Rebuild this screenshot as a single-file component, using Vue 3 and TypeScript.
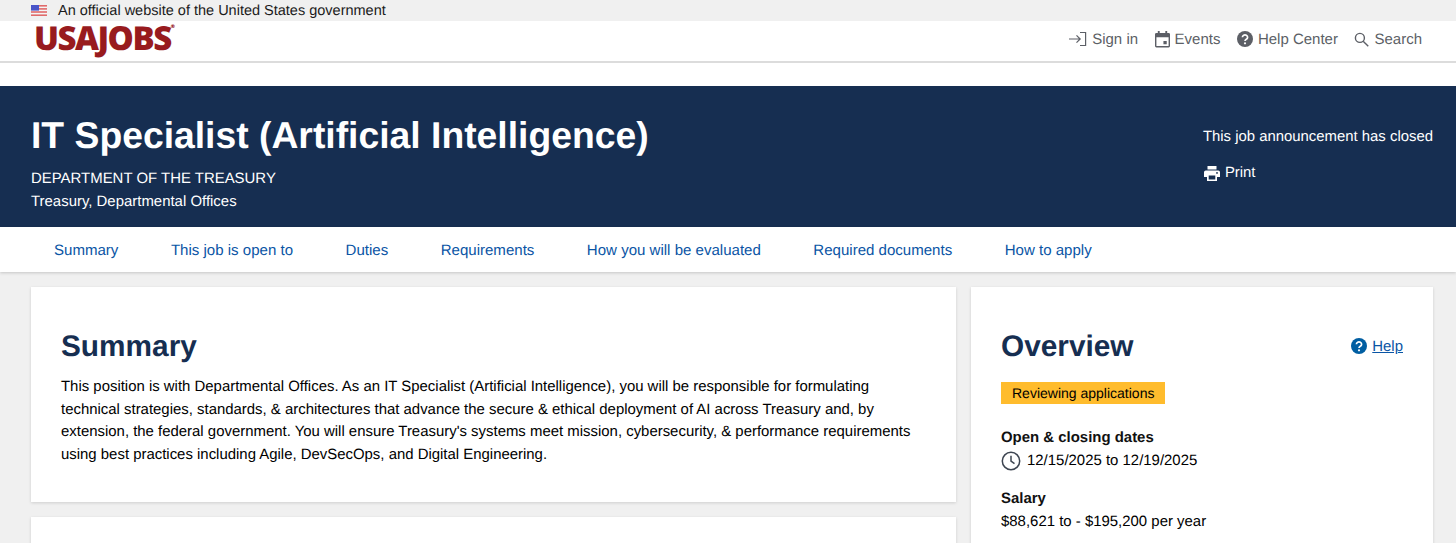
<script setup lang="ts">
const tabs: string[] = [
  "Summary",
  "This job is open to",
  "Duties",
  "Requirements",
  "How you will be evaluated",
  "Required documents",
  "How to apply",
];
</script>

<template>
  <div class="page">
    <div class="gov-banner">
      <svg class="flag" width="16" height="11" viewBox="0 0 16 11" aria-hidden="true">
        <rect width="16" height="11" fill="#f4f4f4" />
        <rect width="16" height="1.6" fill="#e06a6a" />
        <rect y="3.1" width="16" height="1.6" fill="#e06a6a" />
        <rect y="6.2" width="16" height="1.6" fill="#e06a6a" />
        <rect y="9.4" width="16" height="1.6" fill="#e06a6a" />
        <rect width="8" height="5.6" fill="#4a55c8" />
      </svg>
      <span>An official website of the United States government</span>
    </div>

    <header class="site-header">
      <div class="logo">USAJOBS<sup>®</sup></div>
      <nav class="site-nav">
        <a class="site-link">
          <svg width="18" height="16" viewBox="0 0 18 16" fill="none" stroke="#5c5f66" stroke-width="1.2" aria-hidden="true">
            <path d="M0 8h11M7.500 4.300 11.200 8l-3.700 3.700M11 1.500h5.600v13H11" />
          </svg>
          Sign in
        </a>
        <a class="site-link">
          <svg width="15" height="17" viewBox="0 0 16 18" aria-hidden="true">
            <path fill="#5c5f66" d="M3 0h2v2h6V0h2v2h1.500A1.500 1.500 0 0 1 16 3.500V16a1.500 1.500 0 0 1-1.500 1.500h-13A1.500 1.500 0 0 1 0 16V3.500A1.500 1.500 0 0 1 1.500 2H3zM1.500 6.500V16h13V6.500zM9 10.500h3.500V14H9z" fill-rule="evenodd" />
          </svg>
          Events
        </a>
        <a class="site-link">
          <svg width="16" height="16" viewBox="0 0 16 16" aria-hidden="true">
            <circle cx="8" cy="8" r="8" fill="#5c5f66" />
            <path d="M5.400 6.200a2.600 2.400 0 1 1 3.900 2.100c-.8.500-1.300.9-1.300 1.700" fill="none" stroke="#fff" stroke-width="1.700" />
            <circle cx="8" cy="12.300" r="1.100" fill="#fff" />
          </svg>
          Help Center
        </a>
        <a class="site-link">
          <svg width="15" height="15" viewBox="0 0 16 16" fill="none" stroke="#5c5f66" stroke-width="1.500" aria-hidden="true">
            <circle cx="6.300" cy="6.300" r="4.800" />
            <path d="m9.800 9.800 5.400 5.400" />
          </svg>
          Search
        </a>
      </nav>
    </header>

    <div class="spacer"></div>

    <section class="hero">
      <div class="hero-main">
        <h1>IT Specialist (Artificial Intelligence)</h1>
        <div class="agency">DEPARTMENT OF THE TREASURY</div>
        <div class="office">Treasury, Departmental Offices</div>
      </div>
      <div class="hero-side">
        <div class="closed">This job announcement has closed</div>
        <a class="print">
          <svg width="16" height="15" viewBox="0 0 16 15" aria-hidden="true">
            <path fill="#fff" fill-rule="evenodd" d="M3.500 0h9v3.500h-9zM1.800 4.500h12.400A1.800 1.800 0 0 1 16 6.300V11h-3v4H3v-4H0V6.300a1.800 1.800 0 0 1 1.800-1.800zM4.700 9.500v3.900h6.600V9.500zM13 6a.9.9 0 1 0 0 1.800A.9.9 0 0 0 13 6z" />
          </svg>
          Print
        </a>
      </div>
    </section>

    <nav class="tabs">
      <a v-for="t in tabs" :key="t" class="tab">{{ t }}</a>
    </nav>

    <main class="content">
      <div class="left-col">
        <section class="card summary">
          <h2>Summary</h2>
          <p>
            This position is with Departmental Offices. As an IT Specialist (Artificial Intelligence), you will be responsible for formulating<br />
            technical strategies, standards, &amp; architectures that advance the secure &amp; ethical deployment of AI across Treasury and, by<br />
            extension, the federal government. You will ensure Treasury's systems meet mission, cybersecurity, &amp; performance requirements<br />
            using best practices including Agile, DevSecOps, and Digital Engineering.
          </p>
        </section>
        <section class="card next"></section>
      </div>

      <aside class="card overview">
        <div class="overview-head">
          <h2>Overview</h2>
          <a class="help">
            <svg width="16" height="16" viewBox="0 0 16 16" aria-hidden="true">
              <circle cx="8" cy="8" r="8" fill="#005ea2" />
              <path d="M5.400 6.200a2.600 2.400 0 1 1 3.900 2.100c-.8.500-1.300.9-1.300 1.700" fill="none" stroke="#fff" stroke-width="1.700" />
              <circle cx="8" cy="12.300" r="1.100" fill="#fff" />
            </svg>
            <span>Help</span>
          </a>
        </div>
        <div class="status">Reviewing applications</div>
        <div class="label dates-label">Open &amp; closing dates</div>
        <div class="dates">
          <svg width="20" height="20" viewBox="0 0 20 20" fill="none" stroke="#3d4551" stroke-width="1.500" aria-hidden="true">
            <circle cx="10" cy="10" r="8.700" />
            <path d="M10 4.800V10l3.500 2.600" />
          </svg>
          12/15/2025 to 12/19/2025
        </div>
        <div class="label salary-label">Salary</div>
        <div class="salary">$88,621 to - $195,200 per year</div>
      </aside>
    </main>
  </div>
</template>

<style scoped>
.page {
  height: 543px;
  overflow: hidden;
  background: #f0f0f0;
  font-family: "Liberation Sans", Arial, sans-serif;
  color: #000;
  text-rendering: geometricPrecision;
}

.gov-banner {
  height: 21px;
  box-sizing: border-box;
  padding-left: 31px;
  display: flex;
  align-items: center;
  gap: 11px;
  background: #f0f0f0;
  font-size: 14.500px;
  color: #1b1b1b;
}

.site-header {
  height: 40px;
  display: flex;
  justify-content: space-between;
  background: #fff;
  border-bottom: 2px solid #dcdcdc;
}

.logo {
  margin-left: 34px;
  font-family: "Open Sans", sans-serif;
  font-weight: 800;
  font-size: 33px;
  line-height: 34px;
  letter-spacing: -1.500px;
  color: #981b1e;
}

.logo sup {
  font-size: 5px;
  vertical-align: 22px;
  line-height: 0;
  letter-spacing: 0;
}

.site-nav {
  display: flex;
  align-items: center;
  gap: 16.500px;
  padding: 0 34px 4px 0;
}

.site-link {
  display: flex;
  align-items: center;
  gap: 5px;
  font-size: 15px;
  color: #5c5f66;
}

.spacer {
  height: 23px;
  background: #fff;
}

.hero {
  height: 141px;
  display: flex;
  justify-content: space-between;
  padding: 0 23px 0 31px;
  background: #162e51;
  color: #fff;
}

.hero h1 {
  margin: 27px 0 0;
  font-size: 37.300px;
  line-height: 44px;
  font-weight: 700;
}

.agency {
  margin-top: 13px;
  font-size: 14.950px;
  line-height: 18px;
}

.office {
  margin-top: 5px;
  font-size: 14.950px;
  line-height: 18px;
}

.hero-side {
  padding-top: 42px;
  font-size: 14.900px;
  line-height: 18px;
}

.print {
  display: flex;
  align-items: center;
  gap: 5px;
  margin-top: 18px;
  margin-left: 1px;
}

.tabs {
  height: 45px;
  display: flex;
  align-items: center;
  gap: 52.500px;
  padding-left: 54px;
  background: #fff;
  box-shadow: 0 1px 3px rgba(0, 0, 0, 0.18);
  position: relative;
  font-size: 15.050px;
}

.tab {
  color: #0a55a5;
  padding-top: 1px;
}

.content {
  display: flex;
  gap: 15px;
  padding: 15px 23px 0 31px;
}

.left-col {
  width: 925px;
  display: flex;
  flex-direction: column;
  gap: 15px;
}

.card {
  background: #fff;
  box-shadow: 0 1px 3px rgba(0, 0, 0, 0.14);
}

.summary {
  height: 215px;
  box-sizing: border-box;
  padding: 40px 30px 0;
}

.next {
  height: 60px;
}

h2 {
  margin: 0;
  font-size: 29.800px;
  line-height: 40px;
  font-weight: 700;
  color: #162e51;
}

.summary p {
  margin: 9.300px 0 0;
  font-size: 14.930px;
  line-height: 22.400px;
  color: #000;
}

.overview {
  flex: 1;
  height: 300px;
  box-sizing: border-box;
  padding: 40px 30px 0;
}

.overview-head {
  display: flex;
  justify-content: space-between;
  align-items: center;
}

.help {
  display: flex;
  align-items: center;
  gap: 5px;
  padding-bottom: 2px;
  font-size: 14.950px;
  color: #0a55a5;
}

.help span {
  text-decoration: underline;
}

.status {
  display: inline-block;
  margin-top: 15px;
  padding: 1px 11px 0;
  line-height: 21px;
  font-size: 14px;
  background: #ffbc2d;
  color: #000;
}

.label {
  font-size: 14.950px;
  line-height: 18px;
  font-weight: 700;
  color: #111;
}

.dates-label {
  margin-top: 25px;
}

.dates {
  display: flex;
  align-items: center;
  gap: 6px;
  margin-top: 4px;
  font-size: 14.950px;
  line-height: 20px;
}

.salary-label {
  margin-top: 19px;
}

.salary {
  margin-top: 5px;
  font-size: 14.950px;
  line-height: 18px;
}
</style>
